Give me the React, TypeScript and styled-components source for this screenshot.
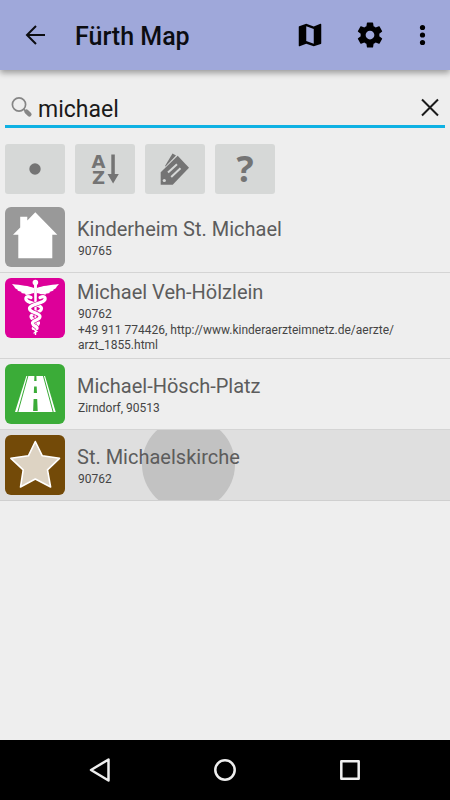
import React, { useState } from "react";
import styled, { createGlobalStyle } from "styled-components";

const GlobalStyle = createGlobalStyle`
  * { box-sizing: border-box; }
  body {
    margin: 0;
    background: #eeeeee;
    font-family: Roboto, "Liberation Sans", sans-serif;
  }
  button, input { font-family: inherit; }
`;

const Screen = styled.div`
  display: flex;
  flex-direction: column;
  min-height: 100vh;
  background: #eeeeee;
`;

const AppBar = styled.header`
  display: flex;
  align-items: center;
  height: 70px;
  padding: 0 4px 0 12px;
  background: #9fa8da;
  box-shadow: 0 3px 6px rgba(0, 0, 0, 0.35);
`;

const Title = styled.h1`
  flex: 1;
  margin: 0;
  padding: 3px 0 0 15px;
  font-size: 25px;
  line-height: 32px;
  font-weight: 500;
  color: #0c0d11;
`;

const IconButton = styled.button<{ $width?: number }>`
  display: flex;
  align-items: center;
  justify-content: center;
  width: ${(p) => p.$width ?? 60}px;
  height: 48px;
  padding: 0;
  border: 0;
  background: transparent;
`;

const Main = styled.main`
  flex: 1;
  padding-top: 18px;
`;

const SearchBar = styled.form`
  display: flex;
  align-items: center;
  height: 40px;
  margin: 0 5px 16px;
  border-bottom: 3px solid #0fb1e3;
`;

const SearchLabel = styled.label`
  display: flex;
  flex: none;
  width: 33px;
  padding-left: 6px;
`;

const SearchInput = styled.input`
  flex: 1;
  min-width: 0;
  height: 36px;
  padding: 6px 0 0;
  border: 0;
  outline: 0;
  background: transparent;
  font-size: 23px;
  color: #1a1a1a;
`;

const Filters = styled.div`
  display: flex;
  gap: 10px;
  padding: 0 5px 8px;
`;

const FilterButton = styled.button`
  display: flex;
  width: 60px;
  height: 50px;
  padding: 0;
  border: 0;
  border-radius: 3px;
  background: #d6d8d7;
`;

const Results = styled.ul`
  margin: 0;
  padding: 0;
  list-style: none;
`;

const Row = styled.li<{ $pressed?: boolean }>`
  position: relative;
  display: flex;
  align-items: center;
  gap: 12px;
  overflow: hidden;
  padding: 5px;
  border-bottom: 1px solid ${(p) => (p.$pressed ? "#cfcfcf" : "#d4d4d4")};
  background: ${(p) => (p.$pressed ? "#dfdfdf" : "transparent")};
`;

const Ripple = styled.span`
  position: absolute;
  top: -12px;
  left: 142px;
  width: 93px;
  height: 93px;
  border-radius: 50%;
  background: #c2c2c2;
`;

const Tile = styled.svg<{ $color: string }>`
  position: relative;
  flex: none;
  align-self: flex-start;
  width: 60px;
  height: 60px;
  border-radius: 6px;
  background: ${(p) => p.$color};
`;

const RowText = styled.div`
  position: relative;
  flex: 1;
  min-width: 0;
  padding: 1px 24px 0 0;
`;

const Name = styled.h2`
  margin: 0;
  font-size: 20px;
  line-height: 26px;
  font-weight: 400;
  color: #5c5c5c;
`;

const Detail = styled.p`
  margin: 0;
  padding-left: 1px;
  font-size: 12px;
  line-height: 18px;
  color: #444444;
`;

const Contact = styled(Detail)`
  line-height: 15px;
`;

const NavBar = styled.nav`
  display: flex;
  align-items: center;
  justify-content: center;
  gap: 77px;
  height: 60px;
  background: #000000;
`;

const House = () => (
  <Tile $color="#999999" viewBox="0 0 60 60" aria-hidden="true">
    <path fill="#fff" d="M30.3 5.3 52.3 27.7H47.3V51.3H13.3V27.7H8L15.2 20.4V9.7H22.3V13.4Z" />
  </Tile>
);

const Caduceus = () => (
  <Tile $color="#dd0099" viewBox="0 0 60 60" aria-hidden="true">
    <g fill="#fff">
      <circle cx="30.4" cy="4.6" r="2.8" />
      <path d="M29 6h3l-.8 51h-1.4z" />
      <path d="M29 10C24 8 16 7 7 6l3 3.4-.6.3 3.6 2.2-.6.7 4.2 1.4-.4 1 4 .8.4 1.2C24 16.8 26 15.600 29 15z" />
      <path d="M31.800 10C37 8 45 7 54 6l-3 3.400.6.3-3.600 2.200.6.7-4.200 1.400.4 1-4 .8-.4 1.200C37 16.800 35 15.600 31.800 15z" />
    </g>
    <g fill="none" strokeLinecap="round">
      <path d="M26 19.5C22 17.5 20.5 19 21 21.5 22 25.5 36.500 26 36.500 30.500S26 34.500 26 38.500 34 42 33.500 45.300 28 48 28.300 50.500" stroke="#fff" strokeWidth="3.2" />
      <path d="M35 19.500C39 17.500 40.500 19 40 21.500 39 25.500 24.500 26 24.500 30.500S35 34.500 35 38.500 27 42 27.500 45.300 32.500 48 32 50.500" stroke="#dd0099" strokeWidth="4.6" />
      <path d="M35 19.500C39 17.500 40.500 19 40 21.500 39 25.500 24.500 26 24.500 30.500S35 34.500 35 38.500 27 42 27.500 45.300 32.500 48 32 50.500" stroke="#fff" strokeWidth="3.2" />
      <path d="M28.300 51 31.800 53.500 29 55" stroke="#fff" strokeWidth="1.4" />
    </g>
  </Tile>
);

const Road = () => (
  <Tile $color="#3bac38" viewBox="0 0 60 60" aria-hidden="true">
    <path fill="#fff" d="M21.3 12H40L50.7 48H10z" />
    <path d="M23 11.5 12.7 48.5M38.300 11.500 48.300 48.500" stroke="#3bac38" strokeWidth="1" />
    <path fill="#3bac38" d="M29.400 12h2l.2 5h-2.400zM29.100 22.500h2.600l.3 6.500h-3.200zM28.600 35h3.600l.5 12h-4.600z" />
  </Tile>
);

const Star = () => (
  <Tile $color="#734a08" viewBox="0 0 60 60" aria-hidden="true">
    <path
      fill="#ddd3c3"
      stroke="#fff"
      strokeWidth="1.6"
      strokeLinejoin="round"
      d="M30.300 6.500 37.300 20.800 54.500 23.300 42.500 34.800 45.600 52 30.300 44 15.500 52 18.200 34.800 5.900 23.300 23.400 20.800Z"
    />
  </Tile>
);

const Glyph = ({ children }: { children: React.ReactNode }) => (
  <svg width="60" height="50" viewBox="0 0 60 50" fill="#747474" aria-hidden="true">
    {children}
  </svg>
);

const results = [
  { name: "Kinderheim St. Michael", detail: "90765", Icon: House },
  {
    name: "Michael Veh-Hölzlein",
    detail: "90762",
    contact: (
      <>
        +49 911 774426, http://www.kinderaerzteimnetz.de/aerzte/
        <wbr />
        arzt_1855.html
      </>
    ),
    Icon: Caduceus,
  },
  { name: "Michael-Hösch-Platz", detail: "Zirndorf, 90513", Icon: Road },
  { name: "St. Michaelskirche", detail: "90762", Icon: Star, pressed: true },
];

export default function App() {
  const [query, setQuery] = useState("michael");

  return (
    <>
      <GlobalStyle />
      <Screen>
        <AppBar>
          <IconButton $width={48} aria-label="Back">
            <svg width="24" height="24" viewBox="0 0 24 24" fill="none" stroke="#0c0d11" strokeWidth="2">
              <path d="M21 12H3.500M12 3 3 12l9 9" />
            </svg>
          </IconButton>
          <Title>Fürth Map</Title>
          <IconButton aria-label="Map">
            <svg width="30" height="30" viewBox="0 0 24 24">
              <path d="M20.500 3l-.16.03L15 5.100 9 3 3.360 4.900c-.21.07-.36.25-.36.48V20.500c0 .28.22.5.5.5l.16-.03L9 18.900l6 2.100 5.640-1.900c.21-.07.36-.25.36-.48V3.500c0-.28-.22-.5-.5-.5zM15 19l-6-2.110V5l6 2.110V19z" />
            </svg>
          </IconButton>
          <IconButton aria-label="Settings">
            <svg width="30" height="30" viewBox="0 0 24 24">
              <path d="M19.430 12.980c.04-.32.07-.64.07-.98s-.03-.66-.07-.98l2.110-1.650c.19-.15.24-.42.12-.64l-2-3.460c-.12-.22-.39-.3-.61-.22l-2.490 1c-.52-.4-1.080-.73-1.690-.98l-.38-2.650C14.460 2.180 14.250 2 14 2h-4c-.25 0-.46.18-.49.42l-.38 2.650c-.61.25-1.170.59-1.690.98l-2.490-1c-.23-.09-.49 0-.61.22l-2 3.460c-.13.22-.07.49.12.64l2.110 1.650c-.04.32-.07.65-.07.98s.03.66.07.98l-2.110 1.650c-.19.15-.24.42-.12.64l2 3.460c.12.22.39.3.61.22l2.490-1c.52.4 1.080.73 1.690.98l.38 2.650c.03.24.24.42.49.42h4c.25 0 .46-.18.49-.42l.38-2.650c.61-.25 1.170-.59 1.690-.98l2.490 1c.23.09.49 0 .61-.22l2-3.460c.12-.22.07-.49-.12-.64l-2.110-1.650zM12 15.500c-1.930 0-3.500-1.570-3.500-3.500s1.570-3.500 3.500-3.500 3.500 1.570 3.500 3.500-1.570 3.500-3.500 3.500z" />
            </svg>
          </IconButton>
          <IconButton $width={46} aria-label="More options">
            <svg width="30" height="30" viewBox="0 0 30 30">
              <circle cx="14.500" cy="7.500" r="2.600" />
              <circle cx="14.500" cy="15" r="2.600" />
              <circle cx="14.500" cy="22.500" r="2.600" />
            </svg>
          </IconButton>
        </AppBar>

        <Main>
          <SearchBar role="search" onSubmit={(e) => e.preventDefault()}>
            <SearchLabel htmlFor="query" aria-label="Search">
              <svg width="22" height="22" viewBox="0 0 22 22" fill="none" stroke="#858585">
                <circle cx="8" cy="8.500" r="6.600" strokeWidth="1.700" />
                <path d="M12.500 13 15 15.500" strokeWidth="1.700" />
                <path d="M15.500 15.700 18.400 18.300" strokeWidth="4.400" strokeLinecap="round" />
              </svg>
            </SearchLabel>
            <SearchInput id="query" value={query} onChange={(e) => setQuery(e.target.value)} />
            <IconButton type="button" $width={30} aria-label="Clear" onClick={() => setQuery("")}>
              <svg width="20" height="20" viewBox="0 0 20 20" stroke="#1a1a1a" strokeWidth="2">
                <path d="M2 2.500 18 18.500M18 2.500 2 18.500" />
              </svg>
            </IconButton>
          </SearchBar>

          <Filters>
            <FilterButton aria-label="Nearby">
              <Glyph>
                <circle cx="30" cy="25" r="5.700" />
              </Glyph>
            </FilterButton>
            <FilterButton aria-label="Sort alphabetically">
              <Glyph>
                <g fontFamily="DejaVu Sans" fontWeight="700" fontSize="18" textAnchor="middle">
                  <text x="23.500" y="24">A</text>
                  <text x="23.500" y="40">Z</text>
                </g>
                <path d="M36.300 10.500h3.500V30h4L38.100 39.500 32.500 30h3.800z" />
              </Glyph>
            </FilterButton>
            <FilterButton aria-label="Categories">
              <Glyph>
                <path d="M27.500 9.500 31 11.500 20.500 22.500 20 22z" />
                <path d="M32.700 11.700 44 23.700 27.700 40.700H15.700V28.300z" />
                <circle cx="19.300" cy="36.500" r="1.600" fill="#d6d8d7" />
                <path d="M23 28.500 32 20.300M26.200 33 35.500 24.300" stroke="#d6d8d7" strokeWidth="2" />
              </Glyph>
            </FilterButton>
            <FilterButton aria-label="Help">
              <Glyph>
                <text x="30" y="38" fontFamily="Open Sans" fontWeight="700" fontSize="36" textAnchor="middle">
                  ?
                </text>
              </Glyph>
            </FilterButton>
          </Filters>

          <Results>
            {results.map(({ name, detail, contact, Icon, pressed }) => (
              <Row key={name} $pressed={pressed}>
                {pressed && <Ripple />}
                <Icon />
                <RowText>
                  <Name>{name}</Name>
                  <Detail>{detail}</Detail>
                  {contact && <Contact>{contact}</Contact>}
                </RowText>
              </Row>
            ))}
          </Results>
        </Main>

        <NavBar aria-label="System">
          <IconButton $width={48} aria-label="System back">
            <svg width="30" height="30" viewBox="0 0 30 30" fill="none" stroke="#eee" strokeWidth="2.500" strokeLinejoin="round">
              <path d="M23.500 4.500v21L6 15z" />
            </svg>
          </IconButton>
          <IconButton $width={48} aria-label="Home">
            <svg width="30" height="30" viewBox="0 0 30 30" fill="none" stroke="#eee" strokeWidth="2.500">
              <circle cx="15" cy="15" r="9.700" />
            </svg>
          </IconButton>
          <IconButton $width={48} aria-label="Recent apps">
            <svg width="30" height="30" viewBox="0 0 30 30" fill="none" stroke="#eee" strokeWidth="2.500" strokeLinejoin="round">
              <path d="M6.300 6.300h17.400v17.400H6.300z" />
            </svg>
          </IconButton>
        </NavBar>
      </Screen>
    </>
  );
}
